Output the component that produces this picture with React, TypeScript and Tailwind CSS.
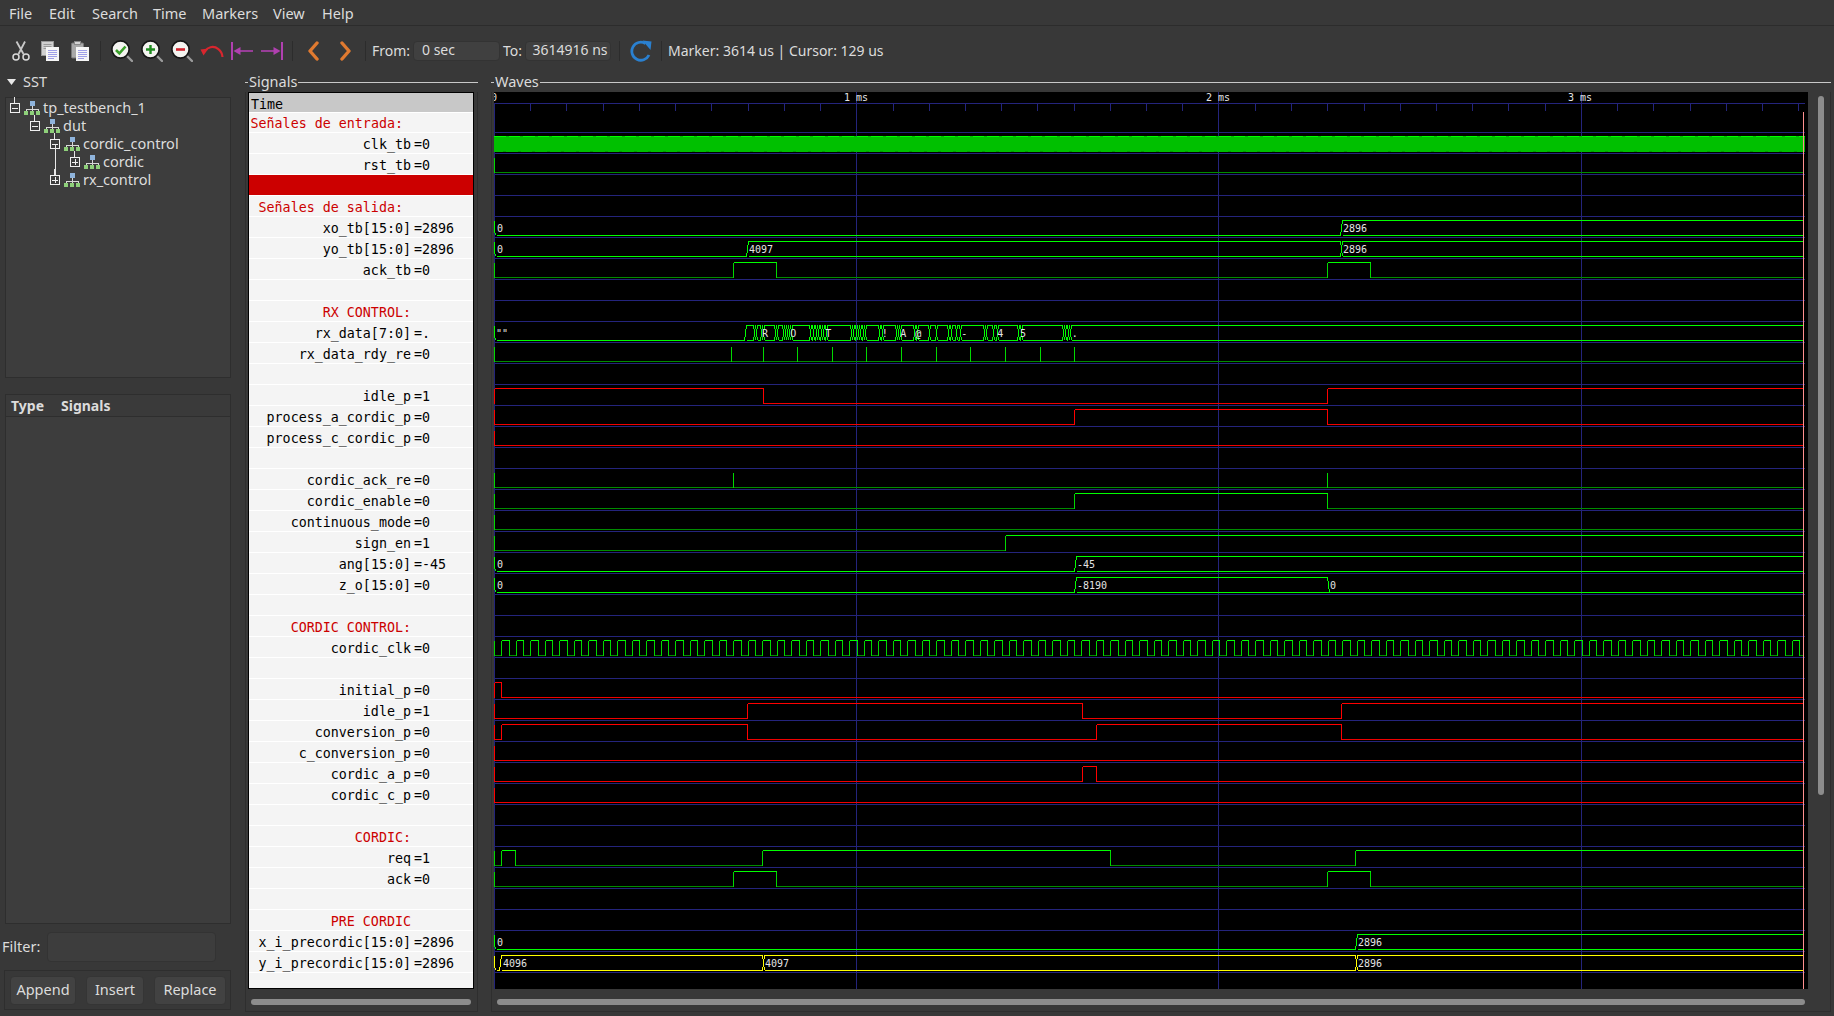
import React from "react";

const LOW = 2, HIGH = 17;
const bottom = (i: number) => 132 + 21 * i;
const X0 = 494, XEND = 1803, GRID_END = 1805;

type Row = { n?: string; v?: string; h?: boolean; red?: boolean };
const rows: Row[] = [
  { n: "Señales de entrada: ", h: true },
  { n: "clk_tb", v: "=0" },
  { n: "rst_tb", v: "=0" },
  { red: true },
  { n: "Señales de salida: ", h: true },
  { n: "xo_tb[15:0]", v: "=2896" },
  { n: "yo_tb[15:0]", v: "=2896" },
  { n: "ack_tb", v: "=0" },
  {},
  { n: "RX CONTROL:", h: true },
  { n: "rx_data[7:0]", v: "=." },
  { n: "rx_data_rdy_re", v: "=0" },
  {},
  { n: "idle_p", v: "=1" },
  { n: "process_a_cordic_p", v: "=0" },
  { n: "process_c_cordic_p", v: "=0" },
  {},
  { n: "cordic_ack_re", v: "=0" },
  { n: "cordic_enable", v: "=0" },
  { n: "continuous_mode", v: "=0" },
  { n: "sign_en", v: "=1" },
  { n: "ang[15:0]", v: "=-45" },
  { n: "z_o[15:0]", v: "=0" },
  {},
  { n: "CORDIC CONTROL:", h: true },
  { n: "cordic_clk", v: "=0" },
  {},
  { n: "initial_p", v: "=0" },
  { n: "idle_p", v: "=1" },
  { n: "conversion_p", v: "=0" },
  { n: "c_conversion_p", v: "=0" },
  { n: "cordic_a_p", v: "=0" },
  { n: "cordic_c_p", v: "=0" },
  {},
  { n: "CORDIC:", h: true },
  { n: "req", v: "=1" },
  { n: "ack", v: "=0" },
  {},
  { n: "PRE CORDIC", h: true },
  { n: "x_i_precordic[15:0]", v: "=2896" },
  { n: "y_i_precordic[15:0]", v: "=2896" },
];

const px = (v: number) => Math.round(v) + 0.5;

function Digital({ row, start = 0, times, red }: { row: number; start?: 0 | 1; times: number[]; red?: boolean }) {
  const b = bottom(row);
  const hy = b - HIGH + 0.5;
  const ly = b - LOW + 0.5;
  const cHigh = red ? "#ff0000" : "#00ff00";
  const cLow = red ? "#f00000" : "#008c00";
  const cVert = red ? "#ff0000" : "#00d800";
  const parts: React.ReactNode[] = [];
  const pts = [X0, ...times, XEND];
  let lvl = start;
  parts.push(<path key="i" d={`M${px(X0)} ${hy}V${ly}`} stroke={cVert} fill="none" />);
  for (let i = 0; i < pts.length - 1; i++) {
    const a = px(pts[i]);
    const e = px(pts[i + 1]);
    const y = lvl ? hy : ly;
    parts.push(<path key={`h${i}`} d={`M${a} ${y}H${e}`} stroke={lvl ? cHigh : cLow} fill="none" />);
    if (i < pts.length - 2) parts.push(<path key={`v${i}`} d={`M${e} ${hy}V${ly}`} stroke={cVert} fill="none" />);
    lvl = lvl ? 0 : 1;
  }
  return <g shapeRendering="crispEdges">{parts}</g>;
}

function Bus({ row, segs, color = "#00ff00" }: { row: number; segs: { t: number; l?: string; zero?: boolean; lx?: number }[]; color?: string }) {
  const b = bottom(row);
  const hy = b - HIGH + 0.5;
  const ly = b - LOW + 0.5;
  let d = "";
  segs.forEach((s, i) => {
    const t = Math.round(s.t);
    const next = i < segs.length - 1 ? Math.round(segs[i + 1].t) : XEND;
    const prevZero = i > 0 ? segs[i - 1].zero : false;
    if (i === 0) {
      d += `M${t + 0.5} ${hy}V${ly - 3}L${t + 2.5} ${ly}`;
    } else {
      d += `M${t + 0.5} ${ly}L${t + 2.5} ${s.zero ? ly : hy}`;
      if (!prevZero) d += `M${t + 0.5} ${hy}L${t + 2.5} ${ly}`;
    }
    d += `M${t + 2.5} ${ly}H${next + 0.5}`;
    if (!s.zero) d += `M${t + 2.5} ${hy}H${next + 0.5}`;
  });
  return (
    <g>
      <path d={d} stroke={color} fill="none" shapeRendering="crispEdges" />
      {segs.map((s, i) =>
        s.l ? (
          <text key={i} x={s.lx ?? Math.round(s.t) + 3} y={b - 5} fontSize={10} fill="#e4e4e4" fontFamily="'DejaVu Sans Mono', monospace">
            {s.l}
          </text>
        ) : null
      )}
    </g>
  );
}

const rxT = [133, 158, 165, 180, 187, 222, 229, 245, 252, 258, 264, 270, 328, 335, 345, 352, 360, 367, 374, 450, 457, 464, 471, 478, 485, 492, 535, 542, 585, 592, 598, 640, 647, 685, 705, 742, 750, 765, 778, 848, 855, 875, 888, 952, 960, 1085, 1092, 1100, 1108].map((x) => 700 + x / 3);
const rxL: [string, number][] = [["R", 186], ["O", 271], ["T", 376], ["!", 545], ["A", 601], ["@", 646], ["-", 784], ["4", 892], ["5", 960], [".", 1115]];
const rdy = [731, 763, 797, 832, 866, 901, 936, 970, 1005, 1040, 1074];
const clkT: number[] = [];
for (let x = X0 + 7.25; x < XEND; x += 7.25) clkT.push(x);
const ticks: number[] = [];
for (let i = 1; i < 37; i++) if (i % 10 !== 0) ticks.push(Math.round(X0 + i * 36.23));
const majors = [856, 1218, 1581];

function Pulses({ row, xs }: { row: number; xs: number[] }) {
  const b = bottom(row);
  return (
    <g shapeRendering="crispEdges">
      <path d={`M494.5 ${b - HIGH + 0.5}V${b - LOW + 0.5}`} stroke="#00d800" />
      <path d={`M494.5 ${b - LOW + 0.5}H${XEND + 0.5}`} stroke="#008c00" />
      {xs.map((x) => (
        <path key={x} d={`M${x + 0.5} ${b - HIGH + 0.5}V${b - LOW + 0.5}`} stroke="#00d800" />
      ))}
    </g>
  );
}

function Waves() {
  const rowBus = rows.map((_, i) => bottom(i));
  return (
    <svg width={1314} height={897} viewBox="494 92 1314 897" className="block bg-black shrink-0">
      <g shapeRendering="crispEdges" stroke="#24247c">
        <path d={`M494.5 103V989`} />
        {majors.map((x) => (
          <path key={x} d={`M${x + 0.5} 92V989`} />
        ))}
        <path d={`M494 103.5H${GRID_END}`} />
        {ticks.map((x) => (
          <path key={x} d={`M${x + 0.5} 104V111`} />
        ))}
        {rowBus.map((y) => (
          <path key={y} d={`M494 ${y + 0.5}H${GRID_END}`} />
        ))}
      </g>
      <g fontFamily="'DejaVu Sans Mono', monospace" fontSize={10} fill="#e4e4e4">
        <text x={491} y={101}>0</text>
        <text x={844} y={101}>1 ms</text>
        <text x={1206} y={101}>2 ms</text>
        <text x={1568} y={101}>3 ms</text>
      </g>
      <g shapeRendering="crispEdges">
        <rect x={494} y={136} width={1311} height={16} fill="#00c000" />
        <path d={`M494 136.5H${GRID_END}`} stroke="#00ff00" strokeDasharray="11.5 3" />
        <path d={`M494 151.5H${GRID_END}`} stroke="#00a000" strokeDasharray="3 11.5" strokeDashoffset="-9" />
      </g>
      <Digital row={2} times={[]} />
      <Bus row={5} segs={[{ t: 494, l: "0", zero: true, lx: 497 }, { t: 1340, l: "2896" }]} />
      <Bus row={6} segs={[{ t: 494, l: "0", zero: true, lx: 497 }, { t: 746, l: "4097" }, { t: 1340, l: "2896" }]} />
      <Digital row={7} times={[733, 776, 1327, 1370]} />
      <Bus row={10} segs={[{ t: 494, l: '""', zero: true, lx: 496 }, ...rxT.map((t) => ({ t }))]} />
      <g fontFamily="'DejaVu Sans Mono', monospace" fontSize={10} fill="#e4e4e4">
        {rxL.map(([s, x]) => (
          <text key={s} x={700 + x / 3} y={bottom(10) - 5}>{s}</text>
        ))}
      </g>
      <Pulses row={11} xs={rdy} />
      <Digital row={13} start={1} times={[763, 1327]} red />
      <Digital row={14} times={[1074, 1327]} red />
      <Digital row={15} times={[]} red />
      <Pulses row={17} xs={[733, 1327]} />
      <Digital row={18} times={[1074, 1327]} />
      <Digital row={19} times={[]} />
      <Digital row={20} times={[1005]} />
      <Bus row={21} segs={[{ t: 494, l: "0", zero: true, lx: 497 }, { t: 1074, l: "-45" }]} />
      <Bus row={22} segs={[{ t: 494, l: "0", zero: true, lx: 497 }, { t: 1074, l: "-8190" }, { t: 1327, l: "0", zero: true }]} />
      <Digital row={25} times={clkT} />
      <Digital row={27} start={1} times={[501]} red />
      <Digital row={28} times={[747, 1082, 1341]} red />
      <Digital row={29} times={[501, 747, 1096, 1341]} red />
      <Digital row={30} times={[]} red />
      <Digital row={31} times={[1082, 1096]} red />
      <Digital row={32} times={[]} red />
      <Digital row={35} times={[501, 515, 762, 1110, 1355]} />
      <Digital row={36} times={[733, 776, 1327, 1370]} />
      <Bus row={39} segs={[{ t: 494, l: "0", zero: true, lx: 497 }, { t: 1355, l: "2896" }]} />
      <Bus row={40} color="#ffff00" segs={[{ t: 494, zero: true }, { t: 499, l: "4096", lx: 503 }, { t: 762, l: "4097" }, { t: 1355, l: "2896" }]} />
      <path d={`M${XEND + 0.5} 112V989`} stroke="#ff9090" shapeRendering="crispEdges" />
    </svg>
  );
}

function Mag({ children }: { children: React.ReactNode }) {
  return (
    <svg width={22} height={22} viewBox="0 0 22 22" className="shrink-0">
      <path d="M15 15L21 21" stroke="#9a9a9a" strokeWidth={2.4} strokeLinecap="round" />
      <circle cx={9.5} cy={9.5} r={8.6} fill="#f4f4f0" stroke="#151515" strokeWidth={1.6} />
      {children}
    </svg>
  );
}

function Doc({ paste }: { paste?: boolean }) {
  return (
    <svg width={18} height={20} viewBox="0 0 18 20" className="shrink-0">
      {paste ? (
        <>
          <rect x={0.5} y={2} width={12} height={15} rx={1} fill="#a8a8a8" stroke="#777" />
          <rect x={3.5} y={0.5} width={6} height={3} fill="#d4d4d4" stroke="#888" />
        </>
      ) : (
        <>
          <rect x={0.5} y={0.5} width={12} height={14} fill="#d0d0d0" stroke="#999" />
          <path d="M2.5 3.5h8M2.5 5.5h8M2.5 7.5h8" stroke="#999" />
        </>
      )}
      <rect x={5} y={6} width={13} height={14} fill="#f6f6f6" />
      <path d="M7 9.5h9M7 11.5h9M7 13.5h9M7 15.5h9M7 17.5h6" stroke="#a0a0e8" />
    </svg>
  );
}

const Sep = ({ cls }: { cls: string }) => <div className={`w-px h-[20px] bg-[#2c2c2c] shrink-0 ${cls}`} />;

function Toolbar() {
  return (
    <div className="flex items-center h-[46px] pt-[4px] pl-[12px] text-[14px] text-[#dcdcdc] shrink-0">
      <svg width={18} height={20} viewBox="0 0 18 20" className="shrink-0" fill="none">
        <path d="M4.5 0.5L11.5 13M13 0.5L6.5 13" stroke="#c8c8c8" strokeWidth={1.8} />
        <circle cx={4} cy={16} r={3} stroke="#dadada" strokeWidth={1.5} />
        <circle cx={14} cy={16} r={3} stroke="#dadada" strokeWidth={1.5} />
      </svg>
      <div className="ml-[11px] flex"><Doc /></div>
      <div className="ml-[12px] flex"><Doc paste /></div>
      <Sep cls="ml-[11px]" />
      <div className="ml-[10px] flex">
        <Mag><path d="M5 10l3.4 3.4L14.5 6.5" stroke="#3aa02a" strokeWidth={2.6} fill="none" /></Mag>
      </div>
      <div className="ml-[8px] flex">
        <Mag><path d="M9.5 5v9M5 9.5h9" stroke="#1f8a1f" strokeWidth={2.4} /></Mag>
      </div>
      <div className="ml-[8px] flex">
        <Mag><path d="M5 9.5h9" stroke="#d0202a" strokeWidth={2.6} /></Mag>
      </div>
      <svg width={24} height={14} viewBox="0 0 24 14" className="ml-[7px] shrink-0" fill="none">
        <path d="M22.5 13C22 6 16 2 10.5 3.2 8 3.8 6.5 5 5.5 6.5" stroke="#d8262e" strokeWidth={2.2} />
        <path d="M0.5 5.5L8.5 4.5 3.5 11.5Z" fill="#d8262e" />
      </svg>
      <svg width={22} height={18} viewBox="0 0 22 18" className="ml-[7px] shrink-0" fill="none">
        <path d="M1 0v18" stroke="#b040b0" strokeWidth={2} />
        <path d="M22 9H6" stroke="#b040b0" strokeWidth={1.6} />
        <path d="M2.5 9L9.5 5v8Z" fill="#b040b0" />
      </svg>
      <svg width={22} height={18} viewBox="0 0 22 18" className="ml-[8px] shrink-0" fill="none">
        <path d="M21 0v18" stroke="#b040b0" strokeWidth={2} />
        <path d="M0 9H16" stroke="#b040b0" strokeWidth={1.6} />
        <path d="M19.5 9L12.5 5v8Z" fill="#b040b0" />
      </svg>
      <Sep cls="ml-[9px]" />
      <svg width={12} height={20} viewBox="0 0 12 20" className="ml-[14px] shrink-0" fill="none">
        <path d="M10 2L3 10l7 8" stroke="#e07a30" strokeWidth={3.4} strokeLinejoin="round" strokeLinecap="round" />
      </svg>
      <svg width={13} height={20} viewBox="0 0 13 20" className="ml-[20px] shrink-0" fill="none">
        <path d="M3 2l7 8-7 8" stroke="#e07a30" strokeWidth={3.4} strokeLinejoin="round" strokeLinecap="round" />
      </svg>
      <Sep cls="ml-[13px]" />
      <span className="ml-[6px] w-[41px] shrink-0 pb-[2px]">From:</span>
      <div className="w-[87px] h-[20px] rounded-[4px] bg-[#404040] border border-[#333333] pl-[8px] leading-[16px] shrink-0">0 sec</div>
      <span className="ml-[3px] w-[22px] shrink-0 pb-[2px]">To:</span>
      <div className="w-[86px] h-[20px] rounded-[4px] bg-[#404040] border border-[#333333] text-center pl-[4px] leading-[16px] shrink-0 whitespace-nowrap">3614916 ns</div>
      <Sep cls="ml-[8px]" />
      <svg width={22} height={22} viewBox="0 0 22 22" className="ml-[10px] shrink-0" fill="none">
        <path d="M19 15A9 9 0 1 1 15.5 3.5" stroke="#2a80d0" strokeWidth={2.8} />
        <path d="M12.5 0.5L21.5 1.5 20.5 10Z" fill="#2a80d0" />
      </svg>
      <Sep cls="ml-[9px]" />
      <span className="ml-[6px] whitespace-pre pb-[2px]">Marker: 3614 us | Cursor: 129 us</span>
    </div>
  );
}

function HierIcon() {
  return (
    <svg width={16} height={14} viewBox="0 0 16 14" className="shrink-0" shapeRendering="crispEdges">
      <rect x={6} y={0} width={5} height={5} fill="#8fb4dc" />
      <path d="M8.5 5v3M2.5 8.5h12M2.5 8v2M8.5 8v2M14.5 8v2" stroke="#d8d8d8" fill="none" />
      <rect x={0} y={10} width={4} height={4} fill="#8ed07a" />
      <rect x={6} y={10} width={4} height={4} fill="#8ed07a" />
      <rect x={12} y={10} width={4} height={4} fill="#8ed07a" />
    </svg>
  );
}

function Expander({ open }: { open: boolean }) {
  return (
    <svg width={11} height={11} viewBox="0 0 11 11" className="shrink-0" shapeRendering="crispEdges" fill="none">
      <rect x={0.5} y={0.5} width={9} height={9} stroke="#f0f0f0" />
      <path d="M2 5.5h6" stroke="#f0f0f0" />
      {!open && <path d="M5.5 2v6" stroke="#f0f0f0" />}
    </svg>
  );
}

function TreeRow({ pad, open, label, guide }: { pad: string; open: boolean; label: string; guide?: boolean }) {
  return (
    <div className={`relative flex items-center h-[18px] ${pad}`}>
      {guide && <div className="absolute left-[49px] top-[-9px] w-px h-[32px] bg-[#e8e8e8]" />}
      <div className="relative"><Expander open={open} /><div className="absolute left-[4px] top-[-6px] w-px h-[6px] bg-[#e8e8e8]" /></div>
      <div className="ml-[3px]"><HierIcon /></div>
      <span className="ml-[3px]">{label}</span>
    </div>
  );
}

function LeftPane() {
  return (
    <div className="w-[245px] shrink-0 flex flex-col text-[14.5px] text-[#dcdcdc]">
      <div className="h-[20px] flex items-center pl-[7px]">
        <svg width={9} height={6} viewBox="0 0 9 6" className="shrink-0"><path d="M0 0h9L4.5 6Z" fill="#e8e8e8" /></svg>
        <span className="ml-[7px]">SST</span>
      </div>
      <div className="mt-[5px] ml-[5px] w-[226px] h-[281px] bg-[#3d3d3d] border border-[#2e2e2e] pt-[1px]">
        <TreeRow pad="pl-[4px]" open label="tp_testbench_1" />
        <TreeRow pad="pl-[24px]" open label="dut" />
        <TreeRow pad="pl-[44px]" open label="cordic_control" />
        <TreeRow pad="pl-[64px]" open={false} label="cordic" guide />
        <TreeRow pad="pl-[44px]" open={false} label="rx_control" />
      </div>
      <div className="mt-[16px] ml-[5px] w-[226px] h-[23px] border border-[#2e2e2e] bg-[#3a3a3a] flex items-center pl-[5px] font-bold text-[14px]">
        <span className="w-[50px]">Type</span>
        <span>Signals</span>
      </div>
      <div className="ml-[5px] w-[226px] h-[507px] bg-[#3d3d3d] border border-t-0 border-[#2e2e2e]" />
      <div className="mt-[8px] h-[30px] flex items-center pl-[2px]">
        <span className="w-[45px] shrink-0">Filter:</span>
        <div className="w-[169px] h-[30px] rounded-[4px] bg-[#3d3d3d] border border-[#333333]" />
      </div>
      <div className="mt-[8px] ml-[4px] w-[227px] h-[40px] border border-[#2e2e2e] flex items-center pl-[5px]">
        <div className="w-[66px] h-[29px] rounded-[4px] bg-[#424242] border border-[#353535] flex items-center justify-center">Append</div>
        <div className="ml-[10px] w-[58px] h-[29px] rounded-[4px] bg-[#424242] border border-[#353535] flex items-center justify-center">Insert</div>
        <div className="ml-[10px] w-[72px] h-[29px] rounded-[4px] bg-[#424242] border border-[#353535] flex items-center justify-center">Replace</div>
      </div>
    </div>
  );
}

function FrameLabel({ text }: { text: string }) {
  return (
    <div className="h-[20px] flex items-center text-[14.5px] text-[#dcdcdc]">
      <div className="w-[3px] h-px bg-[#c8c8c8] shrink-0" />
      <span className="px-[1px] shrink-0">{text}</span>
      <div className="flex-1 h-px bg-[#c8c8c8]" />
    </div>
  );
}

function SignalRow({ r }: { r: Row }) {
  const h = r.red ? "bg-[#cc0000]" : "bg-[#f4f4f4]";
  return (
    <div className={`h-[21px] border-b border-white flex items-center pt-[4px] ${h}`}>
      <div className={`w-[162px] shrink-0 text-right whitespace-pre ${r.h ? "text-[#cc0000]" : "text-black"}`}>{r.n ?? ""}</div>
      {r.v && <div className="pl-[3px] text-black whitespace-pre">{r.v}</div>}
    </div>
  );
}

function SignalsPane() {
  return (
    <div className="w-[233px] shrink-0 flex flex-col h-[940px]">
      <FrameLabel text="Signals" />
      <div className="flex-1 border-x border-b border-[#2e2e2e] pl-[2px] flex flex-col">
        <div className="w-[226px] h-[897px] bg-[#f4f4f4] border border-black overflow-hidden text-[13.33px] leading-none" style={{ fontFamily: "'DejaVu Sans Mono', monospace" }}>
          <div className="h-[20px] bg-[#c8c8c8] border-b border-white flex items-center pl-[2px] pt-[4px] text-black">Time</div>
          {rows.map((r, i) => (
            <React.Fragment key={i}>
              {i === 0 ? (
                <div className="h-[20px] border-b border-white flex items-center pt-[2px]">
                  <div className="w-[162px] text-right whitespace-pre text-[#cc0000]">{r.n}</div>
                </div>
              ) : (
                <SignalRow r={r} />
              )}
            </React.Fragment>
          ))}
        </div>
        <div className="mt-[10px] ml-[3px] w-[220px] h-[6px] rounded-full bg-[#8c8c8c]" />
      </div>
    </div>
  );
}

function WavesPane() {
  return (
    <div className="ml-[13px] w-[1340px] shrink-0 flex flex-col h-[940px]">
      <FrameLabel text="Waves" />
      <div className="flex-1 border-x border-b border-[#2e2e2e] pl-[2px] flex flex-col">
        <div className="flex h-[897px]">
          <Waves />
          <div className="ml-[10px] mt-[4px] w-[6px] h-[699px] rounded-full bg-[#8c8c8c] shrink-0" />
        </div>
        <div className="mt-[10px] ml-[3px] w-[1308px] h-[6px] rounded-full bg-[#8c8c8c]" />
      </div>
    </div>
  );
}

export default function App() {
  const menu: [string, string][] = [["File", "w-[40px]"], ["Edit", "w-[43px]"], ["Search", "w-[61px]"], ["Time", "w-[49px]"], ["Markers", "w-[71px]"], ["View", "w-[49px]"], ["Help", "w-[40px]"]];
  return (
    <div className="w-[1834px] h-[1016px] bg-[#383838] overflow-hidden flex flex-col" style={{ fontFamily: "'Noto Sans', sans-serif" }}>
      <div className="h-[26px] border-b border-[#2c2c2c] flex items-center pl-[9px] pt-[2px] text-[14.5px] text-[#dcdcdc] shrink-0">
        {menu.map(([m, w]) => (
          <span key={m} className={w}>{m}</span>
        ))}
      </div>
      <Toolbar />
      <div className="flex flex-1">
        <LeftPane />
        <SignalsPane />
        <WavesPane />
      </div>
    </div>
  );
}
